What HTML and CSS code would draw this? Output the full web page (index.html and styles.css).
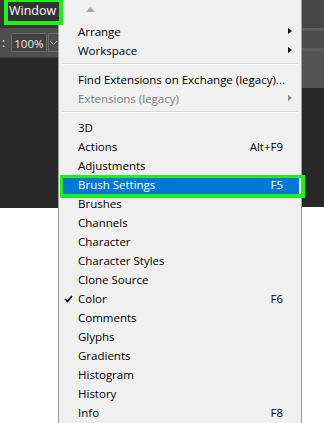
FILE: index.html
```html
<!DOCTYPE html>
<html lang="en">
    <head>
        <meta charset="UTF-8">
        <title>Window menu</title>
        <link rel="stylesheet" href="styles.css">
    </head>
    <body>
        <div class="screen">
            <!-- left strip of the app behind the menu -->
            <div class="side left">
                <div class="menubar">
                    <span class="menu-title">Window</span>
                </div>
                <div class="options">
                    <span class="colon">:</span>
                    <span class="zoom-field">100%</span>
                    <span class="zoom-drop">
                        <svg width="9" height="6" viewBox="0 0 9 6"><polyline points="1,1 4.5,4.5 8,1" fill="none" stroke="#b0b0b0" stroke-width="1"/></svg>
                    </span>
                </div>
                <div class="canvas-dark"></div>
                <div class="canvas-white"></div>
            </div>

            <!-- the dropdown -->
            <div class="dropdown">
                <div class="scroll-up">
                    <svg width="9" height="5" viewBox="0 0 9 5"><polygon points="0,5 4.5,0 9,5" fill="#a8a8a8"/></svg>
                </div>
                <div class="item sub">Arrange</div>
                <div class="item sub">Workspace</div>
                <div class="sep"></div>
                <div class="item">Find Extensions on Exchange (legacy)...</div>
                <div class="item sub disabled">Extensions (legacy)</div>
                <div class="sep"></div>
                <div class="item">3D</div>
                <div class="item">Actions<span class="key">Alt+F9</span></div>
                <div class="item">Adjustments</div>
                <div class="item active">Brush Settings<span class="key">F5</span></div>
                <div class="item">Brushes</div>
                <div class="item">Channels</div>
                <div class="item">Character</div>
                <div class="item">Character Styles</div>
                <div class="item">Clone Source</div>
                <div class="item checked">
                    <svg class="check" width="9" height="8" viewBox="0 0 9 8"><polyline points="1,4 3.5,6.5 8,1" fill="none" stroke="#000" stroke-width="1.6"/></svg>
                    Color<span class="key">F6</span>
                </div>
                <div class="item">Comments</div>
                <div class="item">Glyphs</div>
                <div class="item">Gradients</div>
                <div class="item">Histogram</div>
                <div class="item">History</div>
                <div class="item">Info<span class="key">F8</span></div>
            </div>

            <!-- right strip of the app behind the menu -->
            <div class="side right">
                <div class="r-top"></div>
                <div class="r-line"></div>
                <div class="r-mid"></div>
                <div class="r-line"></div>
                <div class="r-opt"></div>
                <div class="canvas-dark short"></div>
                <div class="canvas-white"></div>
            </div>
        </div>
    </body>
</html>
```

FILE: styles.css
```css
html, body {
    margin: 0;
    padding: 0;
    background: #ffffff;
}

.screen {
    display: grid;
    grid-template-columns: 58px 244px 22px;
    width: 324px;
    height: 423px;
    overflow: hidden;
    font-family: "Open Sans", "Noto Sans", sans-serif;
}

.side {
    display: flex;
    flex-direction: column;
}

/* left strip */
.menubar {
    height: 28px;
    background: #353535;
    padding-left: 4px;
    box-sizing: border-box;
}

/* green annotation box, it runs a few px over the menu edge */
.menu-title {
    position: relative;
    z-index: 2;
    display: block;
    width: 59px;
    height: 25px;
    padding-left: 1px;
    line-height: 18px;
    border: 4px solid #1ff01a;
    border-top-width: 2px;
    box-sizing: border-box;
    background: #333333;
    color: #ffffff;
    font-size: 12.5px;
}

.options {
    height: 29px;
    background: #4f4f4f;
    border-bottom: 1px solid #3a3a3a;
    display: flex;
    align-items: center;
    color: #e8e8e8;
    font-size: 12px;
}

.colon {
    width: 9px;
    padding-left: 2px;
}

.zoom-field {
    width: 37px;
    height: 19px;
    line-height: 19px;
    background: #414141;
    border: 1px solid #6a6a6a;
    border-radius: 2px;
    box-sizing: border-box;
    text-align: center;
    font-size: 11.5px;
}

.zoom-drop {
    width: 10px;
    height: 19px;
    margin-left: 1px;
    display: flex;
    align-items: center;
    justify-content: center;
    border: 1px solid #6a6a6a;
    border-right: 0;
    box-sizing: border-box;
}

.canvas-dark {
    height: 150px;
    background: #282828;
}

.canvas-dark.short {
    height: 119px;
}

.canvas-white {
    flex: 1;
    background: #ffffff;
}

/* right strip */
.r-top {
    height: 28px;
    background: #474747;
}

.r-line {
    height: 3px;
    background: #5e5e5e;
}

.r-mid {
    height: 17px;
    background: #4d4d4d;
}

.r-opt {
    height: 37px;
    background: #535353;
}

/* dropdown */
.dropdown {
    background: #f0f0f0;
    border-left: 1px solid #a0a0a0;
    border-right: 1px solid #a0a0a0;
    color: #000000;
    font-size: 11.5px;
}

.scroll-up {
    height: 22px;
    padding-left: 27px;
    padding-top: 7px;
    box-sizing: border-box;
}

.scroll-up svg {
    display: block;
}

.item {
    position: relative;
    height: 19px;
    line-height: 19px;
    padding: 0 18px 0 19px;
    display: flex;
    white-space: nowrap;
}

.key {
    margin-left: auto;
}

.sub::after {
    content: "";
    position: absolute;
    right: 9px;
    top: 6px;
    border-left: 4px solid #000000;
    border-top: 3.5px solid transparent;
    border-bottom: 3.5px solid transparent;
}

.disabled {
    color: #7a7a7a;
}

.disabled::after {
    border-left-color: #8a8a8a;
}

.sep {
    height: 10px;
    padding-top: 3px;
    box-sizing: border-box;
}

.sep::before {
    content: "";
    display: block;
    margin: 0 3px;
    height: 1px;
    background: #d4d4d4;
    border-bottom: 1px solid #ffffff;
}

.active {
    background: #0078d7;
    color: #ffffff;
    margin-left: 4px;
    margin-right: 2px;
    padding-left: 15px;
    padding-right: 16px;
}

/* green annotation box around the highlighted row */
.active::after {
    content: "";
    position: absolute;
    left: -3px;
    right: -6px;
    top: 0;
    bottom: -4px;
    border: 4px solid #1ff01a;
    border-top-width: 3px;
    border-left-width: 3px;
    box-sizing: border-box;
    pointer-events: none;
}

.check {
    position: absolute;
    left: 5px;
    top: 6px;
}
```
